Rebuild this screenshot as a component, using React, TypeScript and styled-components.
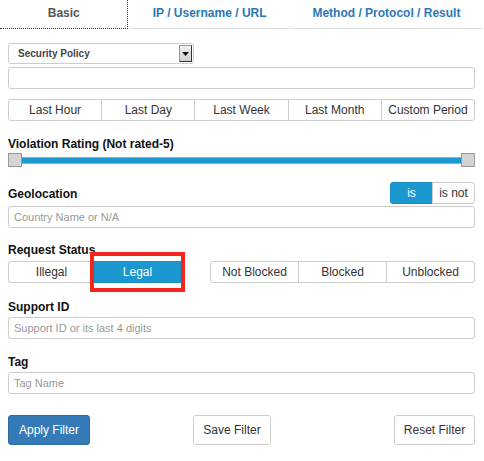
import React from "react";
import styled, { createGlobalStyle } from "styled-components";

const Global = createGlobalStyle`
  body { margin: 0; background: #fff; font-family: "Liberation Sans", Arial, sans-serif; }
  * { box-sizing: border-box; }
`;

const Page = styled.div`
  width: 484px;
  height: 461px;
  overflow: hidden;
`;

const Tabs = styled.div`
  display: flex;
  height: 29px;
`;

const Tab = styled.div<{ $active?: boolean; $w: number }>`
  width: ${(p) => p.$w}px;
  display: flex;
  align-items: center;
  justify-content: center;
  font-size: 12px;
  font-weight: bold;
  padding-bottom: 2px;
  color: ${(p) => (p.$active ? "#555" : "#2b78b8")};
  border-bottom: ${(p) => (p.$active ? "1px dotted #333" : "1px solid #ddd")};
  border-right: ${(p) => (p.$active ? "1px dotted #333" : "none")};
  margin-right: 2px;
`;

const Body = styled.div`
  padding: 14px 9px 0 8px;
  display: flex;
  flex-direction: column;
`;

const Select = styled.div`
  width: 186px;
  height: 21px;
  border: 1px solid #ccc;
  border-radius: 3px;
  display: flex;
  align-items: center;
  justify-content: space-between;
  padding-left: 9px;
  padding-right: 1px;
  font-size: 10px;
  font-weight: bold;
  color: #444;
`;

const Arrow = styled.div`
  width: 13px;
  height: 17px;
  background: linear-gradient(#f0f0f0, #d0d0d0);
  border: 1px solid #999;
  border-right-color: #333;
  border-bottom-color: #333;
  display: flex;
  align-items: center;
  justify-content: center;
`;

const Input = styled.div<{ $mt?: number }>`
  height: 22px;
  border: 1px solid #ccc;
  border-radius: 3px;
  margin-top: ${(p) => p.$mt ?? 0}px;
  font-size: 11px;
  color: #999;
  padding-left: 5px;
  display: flex;
  align-items: center;
`;

const Group = styled.div<{ $mt?: number }>`
  display: flex;
  margin-top: ${(p) => p.$mt ?? 0}px;
`;

const SegBtn = styled.div<{ $active?: boolean; $w?: number }>`
  ${(p) => (p.$w ? `width: ${p.$w}px;` : "flex: 1;")}
  height: 22px;
  border: 1px solid ${(p) => (p.$active ? "#1a8cc4" : "#ccc")};
  margin-left: -1px;
  background: ${(p) => (p.$active ? "#1b98d0" : "#fff")};
  color: ${(p) => (p.$active ? "#fff" : "#333")};
  font-size: 12px;
  display: flex;
  align-items: center;
  justify-content: center;
  &:first-child { margin-left: 0; border-radius: 3px 0 0 3px; }
  &:last-child { border-radius: 0 3px 3px 0; }
`;

const Label = styled.div<{ $mt?: number }>`
  font-size: 12px;
  font-weight: bold;
  color: #111;
  margin-top: ${(p) => p.$mt ?? 0}px;
  line-height: 14px;
`;

const SliderWrap = styled.div`
  position: relative;
  height: 14px;
  margin-top: 2px;
  display: flex;
  align-items: center;
`;

const Track = styled.div`
  flex: 1;
  height: 7px;
  background: #1b98d0;
  border: 1px solid #8fb3c6;
`;

const Handle = styled.div<{ $right?: boolean }>`
  position: absolute;
  top: 0;
  ${(p) => (p.$right ? "right: 0;" : "left: 0;")}
  width: 14px;
  height: 14px;
  background: #d3d3d3;
  border: 1px solid #999;
`;

const Row = styled.div<{ $mt?: number }>`
  display: flex;
  justify-content: space-between;
  align-items: flex-end;
  margin-top: ${(p) => p.$mt ?? 0}px;
`;

const Actions = styled.div`
  display: flex;
  margin-top: 21px;
`;

const Highlight = styled.div`
  position: absolute;
  left: 82px;
  top: -9px;
  width: 95px;
  height: 40px;
  border: 4px solid #f2261e;
  pointer-events: none;
`;

const Rel = styled.div`
  position: relative;
  display: flex;
`;

const Btn = styled.div<{ $primary?: boolean; $w: number; $ml?: string }>`
  width: ${(p) => p.$w}px;
  margin-left: ${(p) => p.$ml ?? "0"};
  height: 30px;
  border-radius: 3px;
  border: 1px solid ${(p) => (p.$primary ? "#2e6da4" : "#ccc")};
  background: ${(p) => (p.$primary ? "#337ab7" : "#fff")};
  color: ${(p) => (p.$primary ? "#fff" : "#333")};
  font-size: 12px;
  display: flex;
  align-items: center;
  justify-content: center;
`;

export default function App() {
  return (
    <Page>
      <Global />
      <Tabs>
        <Tab $active $w={129}>Basic</Tab>
        <Tab $w={159}>IP / Username / URL</Tab>
        <Tab $w={192}>Method / Protocol / Result</Tab>
      </Tabs>
      <Body>
        <Select>
          Security Policy
          <Arrow>
            <svg width="7" height="4" viewBox="0 0 7 4"><path d="M0 0h7L3.5 4z" fill="#111" /></svg>
          </Arrow>
        </Select>
        <Input $mt={3} />
        <Group $mt={10}>
          <SegBtn>Last Hour</SegBtn>
          <SegBtn>Last Day</SegBtn>
          <SegBtn>Last Week</SegBtn>
          <SegBtn>Last Month</SegBtn>
          <SegBtn>Custom Period</SegBtn>
        </Group>
        <Label $mt={16}>Violation Rating (Not rated-5)</Label>
        <SliderWrap>
          <Handle />
          <Track />
          <Handle $right />
        </SliderWrap>
        <Row $mt={15}>
          <Label style={{ marginBottom: 3 }}>Geolocation</Label>
          <Group>
            <SegBtn $active $w={43}>is</SegBtn>
            <SegBtn $w={43}>is not</SegBtn>
          </Group>
        </Row>
        <Input $mt={2}>Country Name or N/A</Input>
        <Label $mt={15}>Request Status</Label>
        <Row $mt={4}>
          <Rel>
            <SegBtn $w={87}>Illegal</SegBtn>
            <SegBtn $active $w={87}>Legal</SegBtn>
            <Highlight />
          </Rel>
          <Group>
            <SegBtn $w={89}>Not Blocked</SegBtn>
            <SegBtn $w={89}>Blocked</SegBtn>
            <SegBtn $w={89}>Unblocked</SegBtn>
          </Group>
        </Row>
        <Label $mt={17}>Support ID</Label>
        <Input $mt={3}>Support ID or its last 4 digits</Input>
        <Label $mt={16}>Tag</Label>
        <Input $mt={3}>Tag Name</Input>
        <Actions>
          <Btn $primary $w={82}>Apply Filter</Btn>
          <Btn $w={78} $ml="103px">Save Filter</Btn>
          <Btn $w={81} $ml="auto">Reset Filter</Btn>
        </Actions>
      </Body>
    </Page>
  );
}
